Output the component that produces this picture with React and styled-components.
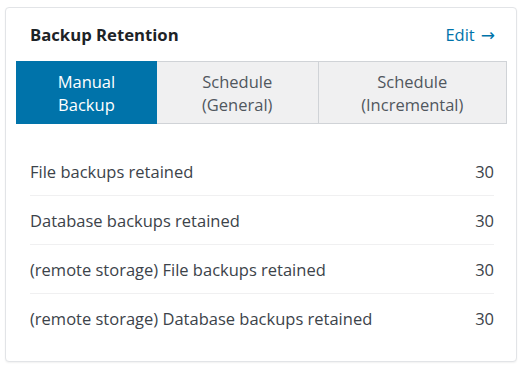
import React from 'react';
import styled, { createGlobalStyle } from 'styled-components';

const Global = createGlobalStyle`
  body {
    margin: 0;
    background: #ffffff;
    font-family: "Open Sans", "Noto Sans", sans-serif;
    color: #3c434a;
  }
`;

const Page = styled.div`
  padding: 7px 6px 7px 5px;
`;

const Card = styled.section`
  width: 512px;
  height: 355px;
  box-sizing: border-box;
  border: 1px solid #e2e4e7;
  border-radius: 4px;
  box-shadow: 0 1px 2px rgba(0, 0, 0, 0.06);
  background: #fff;
  display: flex;
  flex-direction: column;
`;

const Header = styled.header`
  height: 53px;
  display: flex;
  align-items: center;
  justify-content: space-between;
  padding: 0 21px 0 24px;
`;

const Title = styled.h2`
  margin: 0;
  font-size: 16.7px;
  font-weight: 700;
  color: #1d2327;
`;

const EditLink = styled.a`
  font-size: 16.5px;
  color: #0073aa;
  text-decoration: none;
`;

const Arrow = styled.span`
  font-family: "DejaVu Sans", sans-serif;
  font-size: 17px;
  margin-left: 6px;
`;

const Tabs = styled.div`
  display: flex;
  margin: 0 9px 0 10px;
  height: 63px;
`;

const Tab = styled.button`
  flex: ${p => p.$grow} 1 0;
  min-width: 0;
  font-family: inherit;
  font-size: 16.5px;
  line-height: 23px;
  padding: 0;
  border: 1px solid ${p => (p.$active ? '#0073aa' : '#d0d3d7')};
  border-left-width: ${p => (p.$first ? '1px' : '0')};
  background: ${p => (p.$active ? '#0073aa' : '#f0f0f1')};
  color: ${p => (p.$active ? '#ffffff' : '#50575e')};
  cursor: pointer;
`;

const List = styled.ul`
  list-style: none;
  margin: 23px 0 0;
  padding: 0 22px 0 24px;
`;

const Row = styled.li`
  height: 48px;
  display: flex;
  align-items: center;
  justify-content: space-between;
  font-size: 16.5px;
  color: #3c434a;
  & + & {
    border-top: 1px solid #f0f0f1;
  }
`;

const rows = [
  'File backups retained',
  'Database backups retained',
  '(remote storage) File backups retained',
  '(remote storage) Database backups retained',
];

export default function App() {
  return (
    <Page>
      <Global />
      <Card>
        <Header>
          <Title>Backup Retention</Title>
          <EditLink href="#">Edit<Arrow>→</Arrow></EditLink>
        </Header>
        <Tabs>
          <Tab $active $first $grow={140}>Manual<br />Backup</Tab>
          <Tab $grow={162}>Schedule<br />(General)</Tab>
          <Tab $grow={189}>Schedule<br />(Incremental)</Tab>
        </Tabs>
        <List>
          {rows.map(label => (
            <Row key={label}>
              <span>{label}</span>
              <span>30</span>
            </Row>
          ))}
        </List>
      </Card>
    </Page>
  );
}
